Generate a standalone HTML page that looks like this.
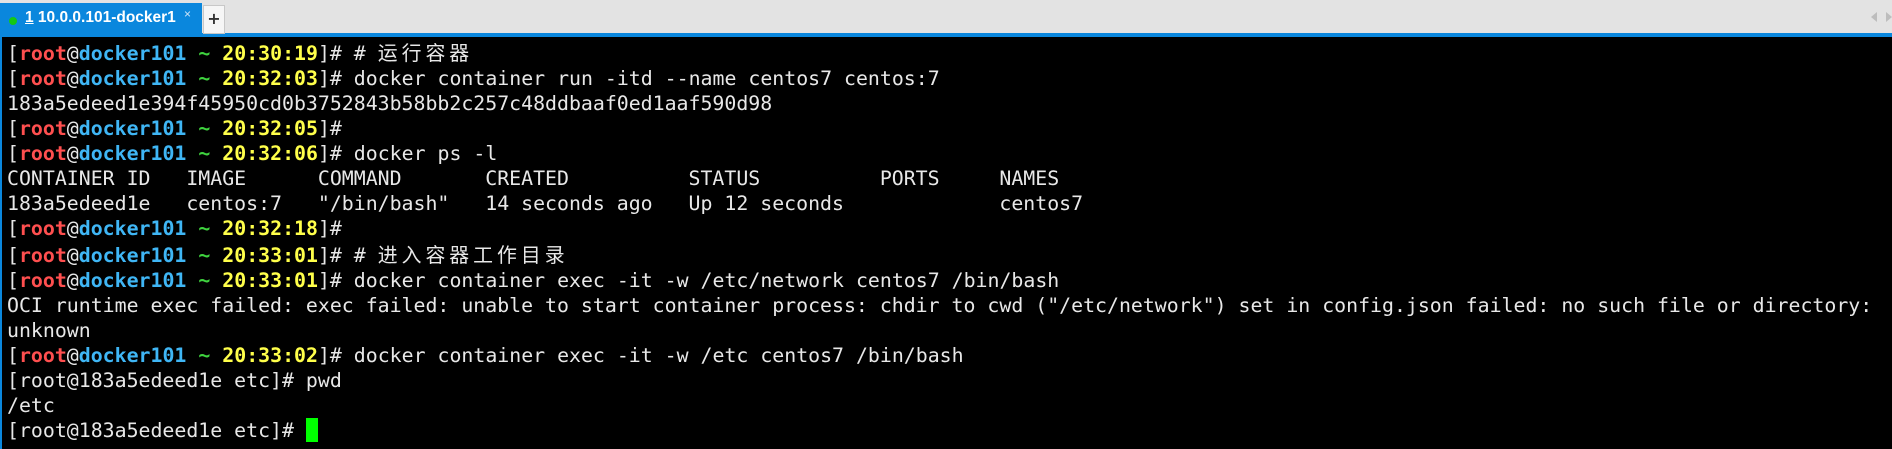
<!DOCTYPE html>
<html><head><meta charset="utf-8"><style>
html,body{margin:0;padding:0;width:1892px;height:449px;overflow:hidden;background:#000;}
#bar{position:absolute;left:0;top:0;width:1892px;height:33px;background:#e3e3e3;}
#line{position:absolute;left:0;top:33px;width:1892px;height:4px;background:#0a87dd;}
#tab{position:absolute;left:0;top:3px;width:202px;height:31px;background:#0a87dd;color:#fff;font:bold 15px "Liberation Sans","DejaVu Sans",sans-serif;}
#tab .dot{position:absolute;left:9px;top:14px;width:8px;height:8px;border-radius:50%;background:#14c814;}
#tab .t{position:absolute;left:25px;top:6px;font-size:15.5px;}
#tab .x{position:absolute;left:184px;top:4px;font-size:12px;font-weight:normal;color:#cfe6f8;}
#plus{position:absolute;left:203px;top:5px;width:20px;height:27px;background:#f6f6f6;border:1px solid #c8c8c8;font:bold 16px "DejaVu Sans",sans-serif;color:#333;text-align:center;line-height:26px;}
#arr{position:absolute;left:1871px;top:12px;width:0;height:0;border-top:5px solid transparent;border-bottom:5px solid transparent;border-right:6px solid #bdbdbd;}
#arr2{position:absolute;left:1886px;top:12px;width:0;height:0;border-top:5px solid transparent;border-bottom:5px solid transparent;border-left:6px solid #bdbdbd;}
#lb{position:absolute;left:0;top:37px;width:2px;height:412px;background:#0a87dd;}
#term{position:absolute;left:7px;top:39px;margin:0;font:19.88px/25px "DejaVu Sans Mono","Liberation Mono","Noto Sans CJK SC",monospace;color:#e8e8e8;white-space:pre;}
.r{color:#ff4f4f;font-weight:bold}.b{color:#3fb6f5;font-weight:bold}.g{color:#3fd33f;font-weight:bold}.y{color:#ffff4a;font-weight:bold}
.c{font-family:"Noto Sans CJK SC",sans-serif;letter-spacing:4px;}
.cur{display:inline-block;width:12px;height:24px;background:#00ff00;vertical-align:-5px;}
</style></head><body>
<div id="bar"></div><div id="line"></div>
<div id="tab"><div class="dot"></div><div class="t"><u>1</u> 10.0.0.101-docker1</div><div class="x">×</div></div>
<div id="plus">+</div><div id="arr"></div><div id="arr2"></div>
<div id="lb"></div>
<pre id="term">[<span class="r">root</span>@<span class="b">docker101</span> <span class="g">~</span> <span class="y">20:30:19</span>]# # <span class="c">运行容器</span>
[<span class="r">root</span>@<span class="b">docker101</span> <span class="g">~</span> <span class="y">20:32:03</span>]# docker container run -itd --name centos7 centos:7
183a5edeed1e394f45950cd0b3752843b58bb2c257c48ddbaaf0ed1aaf590d98
[<span class="r">root</span>@<span class="b">docker101</span> <span class="g">~</span> <span class="y">20:32:05</span>]#
[<span class="r">root</span>@<span class="b">docker101</span> <span class="g">~</span> <span class="y">20:32:06</span>]# docker ps -l
CONTAINER ID   IMAGE      COMMAND       CREATED          STATUS          PORTS     NAMES
183a5edeed1e   centos:7   "/bin/bash"   14 seconds ago   Up 12 seconds             centos7
[<span class="r">root</span>@<span class="b">docker101</span> <span class="g">~</span> <span class="y">20:32:18</span>]#
[<span class="r">root</span>@<span class="b">docker101</span> <span class="g">~</span> <span class="y">20:33:01</span>]# # <span class="c">进入容器工作目录</span>
[<span class="r">root</span>@<span class="b">docker101</span> <span class="g">~</span> <span class="y">20:33:01</span>]# docker container exec -it -w /etc/network centos7 /bin/bash
OCI runtime exec failed: exec failed: unable to start container process: chdir to cwd ("/etc/network") set in config.json failed: no such file or directory:
unknown
[<span class="r">root</span>@<span class="b">docker101</span> <span class="g">~</span> <span class="y">20:33:02</span>]# docker container exec -it -w /etc centos7 /bin/bash
[root@183a5edeed1e etc]# pwd
/etc
[root@183a5edeed1e etc]# <span class="cur"></span></pre>
</body></html>
